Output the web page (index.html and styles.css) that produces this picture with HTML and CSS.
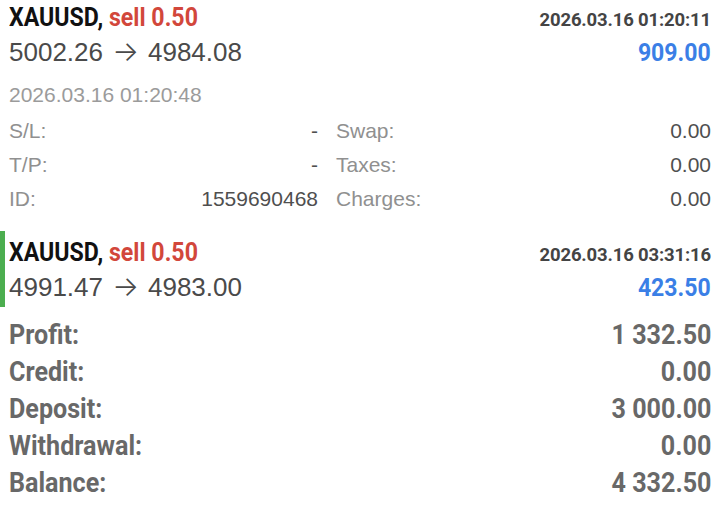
FILE: index.html
```html
<!DOCTYPE html>
<html>
<head>
<meta charset="utf-8">
<link rel="stylesheet" href="styles.css">
</head>
<body>
<div class="page">
  <section class="deal">
    <div class="head">
      <div class="title"><span class="sym">XAUUSD,</span> <span class="side">sell 0.50</span></div>
      <div class="time-b">2026.03.16 01:20:11</div>
    </div>
    <div class="prices">
      <div class="px">5002.26<span class="arrow">→</span>4984.08</div>
      <div class="profit">909.00</div>
    </div>
    <div class="open-time">2026.03.16 01:20:48</div>
    <div class="details">
      <span class="lbl">S/L:</span><span class="val">-</span><span class="lbl lbl2">Swap:</span><span class="val">0.00</span>
      <span class="lbl">T/P:</span><span class="val">-</span><span class="lbl lbl2">Taxes:</span><span class="val">0.00</span>
      <span class="lbl">ID:</span><span class="val">1559690468</span><span class="lbl lbl2">Charges:</span><span class="val">0.00</span>
    </div>
  </section>
  <section class="deal marked">
    <div class="head">
      <div class="title"><span class="sym">XAUUSD,</span> <span class="side">sell 0.50</span></div>
      <div class="time-b">2026.03.16 03:31:16</div>
    </div>
    <div class="prices">
      <div class="px">4991.47<span class="arrow">→</span>4983.00</div>
      <div class="profit">423.50</div>
    </div>
  </section>
  <section class="summary">
    <div class="srow"><span class="sl">Profit:</span><span class="sv">1 332.50</span></div>
    <div class="srow"><span class="sl">Credit:</span><span class="sv">0.00</span></div>
    <div class="srow"><span class="sl">Deposit:</span><span class="sv">3 000.00</span></div>
    <div class="srow"><span class="sl">Withdrawal:</span><span class="sv">0.00</span></div>
    <div class="srow"><span class="sl">Balance:</span><span class="sv">4 332.50</span></div>
  </section>
</div>
</body>
</html>
```

FILE: styles.css
```css
html, body {
  margin: 0;
  padding: 0;
  background: #ffffff;
}
body {
  width: 720px;
  height: 521px;
  overflow: hidden;
  font-family: "Liberation Sans", Arial, sans-serif;
}
.page {
  display: flex;
  flex-direction: column;
}
.deal {
  padding: 2px 9px 0 9px;
  display: flex;
  flex-direction: column;
}
.deal.marked {
  margin-top: 15px;
  border-left: 5px solid #4cae4f;
  padding: 6px 9px 4px 4px;
}
.head {
  display: flex;
  justify-content: space-between;
  align-items: baseline;
  height: 30px;
}
.title {
  display: inline-block;
  font-family: Roboto, sans-serif;
  font-weight: 700;
  font-size: 26px;
  line-height: 30px;
  white-space: nowrap;
  transform: scaleX(0.89);
  transform-origin: left center;
}
.sym { color: #111111; }
.side { color: #d2473b; }
.time-b {
  font-family: Roboto, sans-serif;
  font-weight: 700;
  font-size: 18.5px;
  color: #444444;
  letter-spacing: -0.15px;
}
.prices {
  display: flex;
  justify-content: space-between;
  align-items: baseline;
  height: 34px;
  margin-top: 2px;
}
.px {
  font-size: 26px;
  line-height: 34px;
  color: #4a4a4a;
  white-space: nowrap;
}
.arrow {
  display: inline-block;
  width: 45px;
  text-align: center;
  font-family: Inter, sans-serif;
  font-weight: 300;
  font-size: 28px;
  color: #4a4a4a;
}
.profit {
  display: inline-block;
  font-family: Roboto, sans-serif;
  font-weight: 700;
  font-size: 26.5px;
  color: #3b7fe6;
  transform: scaleX(0.87);
  transform-origin: right center;
}
.open-time {
  font-size: 21px;
  line-height: 24px;
  margin-top: 15px;
  color: #9b9b9b;
}
.details {
  display: grid;
  grid-template-columns: 80px 229px 120px 1fr;
  margin-top: 7px;
  font-size: 21px;
  line-height: 34px;
}
.details .lbl { color: #909090; }
.details .lbl2 { padding-left: 18px; }
.details .val { color: #4f4f4f; text-align: right; }
.summary {
  padding: 10px 9px 0 9px;
  display: flex;
  flex-direction: column;
}
.srow {
  display: flex;
  justify-content: space-between;
  font-family: Roboto, sans-serif;
  font-weight: 700;
  font-size: 27px;
  line-height: 37px;
  color: #686868;
}
.sl, .sv {
  display: inline-block;
  white-space: nowrap;
  transform: scaleX(0.93);
}
.sl { transform-origin: left center; }
.sv { transform-origin: right center; }
```
